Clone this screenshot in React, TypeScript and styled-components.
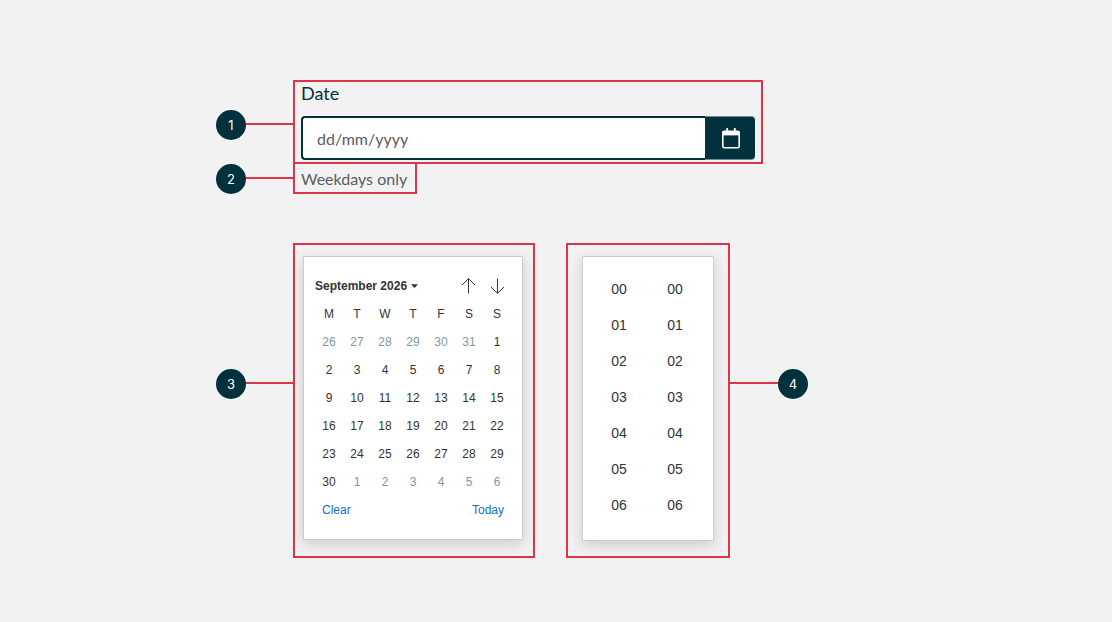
import React from "react";
import styled, { createGlobalStyle } from "styled-components";

const ink = "#00313c";
const accent = "#dc3545";

const GlobalStyle = createGlobalStyle`
  *, *::before, *::after { box-sizing: border-box; }
  body { margin: 0; background: #f2f2f2; }
  button { padding: 0; border: 0; background: none; font: inherit; color: inherit; cursor: pointer; }
`;

const Page = styled.main`
  max-width: 680px;
  margin: 0 auto;
  padding: 80px 0 64px;
  font-family: Lato, "Liberation Sans", sans-serif;
`;

const Row = styled.div<{ $gap?: number }>`
  display: flex;
  align-items: flex-start;
  margin-top: ${(p) => p.$gap ?? 0}px;
`;

const CalloutBox = styled.div<{ $side: "left" | "right"; $top: number }>`
  display: flex;
  flex: none;
  flex-direction: ${(p) => (p.$side === "left" ? "row" : "row-reverse")};
  width: 78px;
  padding-top: ${(p) => p.$top}px;
  margin-right: ${(p) => (p.$side === "left" ? -1 : 0)}px;
`;

const Badge = styled.span`
  flex: none;
  width: 30px;
  height: 30px;
  border-radius: 50%;
  background: ${ink};
  color: #fff;
  font-family: Inter, "Liberation Sans", sans-serif;
  font-size: 13px;
  line-height: 30px;
  text-align: center;
`;

const Connector = styled.span`
  flex: 1;
  height: 2px;
  margin-top: 13px;
  background: ${accent};
`;

const Outline = styled.div`
  border: 2px solid ${accent};
`;

const FieldOutline = styled(Outline)`
  flex: 0 1 470px;
  padding: 0 6px 2px;
`;

const HintOutline = styled(Outline)`
  min-width: 124px;
  padding: 2px 6px 0;
`;

const CalendarOutline = styled(Outline)`
  flex: none;
  margin-right: 31px;
  padding: 11px 10px 16px 8px;
`;

const TimeOutline = styled(Outline)`
  flex: none;
  padding: 11px 14px 15px;
`;

const Label = styled.label`
  display: block;
  height: 34px;
  color: ${ink};
  font-size: 18px;
  line-height: 22px;
`;

const Field = styled.div`
  display: flex;
  height: 44px;
`;

const DateInput = styled.input`
  flex: 1;
  min-width: 0;
  padding: 2px 14px 0;
  border: 2px solid ${ink};
  border-right: 0;
  border-radius: 4px 0 0 4px;
  background: #fff;
  color: #555;
  font: 16px/24px Lato, "Liberation Sans", sans-serif;
  &::placeholder { color: #5c5c5c; opacity: 1; }
`;

const CalendarButton = styled.button`
  display: flex;
  align-items: center;
  justify-content: center;
  width: 50px;
  border-top: 1px solid #728a91;
  border-bottom: 1px solid #728a91;
  border-radius: 0 4px 4px 0;
  background: ${ink};
`;

const Hint = styled.p`
  margin: 0;
  color: #5c5c5c;
  font-size: 16px;
  line-height: 26px;
  white-space: nowrap;
`;

const Panel = styled.div`
  border: 1px solid #ccc;
  border-radius: 1px;
  background: #fff;
  box-shadow: 0 4px 14px rgba(0, 0, 0, 0.16);
  color: #333;
  font-family: "Liberation Sans", Arial, sans-serif;
`;

const CalendarPanel = styled(Panel)`
  padding: 15px 11px;
  font-size: 12px;
`;

const PanelHeader = styled.div`
  display: flex;
  align-items: center;
  height: 28px;
`;

const MonthButton = styled.button`
  display: flex;
  align-items: center;
  gap: 4px;
  margin-right: auto;
  font-weight: 700;
`;

const ArrowButton = styled.button`
  display: flex;
  align-items: center;
  justify-content: center;
  width: 29px;
  height: 28px;
`;

const DayTable = styled.table`
  border-collapse: collapse;
  th, td {
    width: 28px;
    height: 28px;
    padding: 0;
    font-weight: 400;
    text-align: center;
  }
`;

const DayButton = styled.button<{ $outside: boolean }>`
  display: block;
  width: 28px;
  height: 28px;
  color: ${(p) => (p.$outside ? "#7f989e" : "#333")};
`;

const PanelFooter = styled.div`
  display: flex;
  align-items: center;
  justify-content: space-between;
  height: 28px;
  padding: 0 7px;
`;

const ActionButton = styled.button`
  color: #1170cc;
`;

const TimePanel = styled(Panel)`
  display: flex;
  padding: 14px 10px 17px 8px;
  font-size: 14px;
`;

const TimeList = styled.ul`
  margin: 0;
  padding: 0;
  list-style: none;
`;

const TimeButton = styled.button`
  display: block;
  width: 56px;
  height: 36px;
`;

function Callout({ n, top, side = "left" }: { n: number; top: number; side?: "left" | "right" }) {
  return (
    <CalloutBox $side={side} $top={top}>
      <Badge>{n}</Badge>
      <Connector />
    </CalloutBox>
  );
}

const weekdays = ["M", "T", "W", "T", "F", "S", "S"];
const days = [
  ...[26, 27, 28, 29, 30, 31].map((day) => ({ day, outside: true })),
  ...Array.from({ length: 30 }, (_, i) => ({ day: i + 1, outside: false })),
  ...[1, 2, 3, 4, 5, 6].map((day) => ({ day, outside: true })),
];
const weeks = Array.from({ length: 6 }, (_, i) => days.slice(i * 7, i * 7 + 7));
const times = ["00", "01", "02", "03", "04", "05", "06"];

export default function App() {
  return (
    <>
      <GlobalStyle />
      <Page>
        <Row>
          <Callout n={1} top={30} />
          <FieldOutline>
            <Label htmlFor="date">Date</Label>
            <Field>
              <DateInput id="date" type="text" placeholder="dd/mm/yyyy" aria-describedby="date-hint" />
              <CalendarButton type="button" aria-label="Open calendar">
                <svg width="20" height="22" viewBox="0 0 20 22" fill="none">
                  <path d="M7.2 1v3M14.8 1v3" stroke="#fff" strokeWidth="1.8" />
                  <rect x="2.8" y="4.3" width="16.4" height="16.4" rx="1.4" stroke="#fff" strokeWidth="1.6" />
                  <path d="M2.5 4h17v4.4h-17z" fill="#fff" />
                </svg>
              </CalendarButton>
            </Field>
          </FieldOutline>
        </Row>
        <Row $gap={-2}>
          <Callout n={2} top={2} />
          <HintOutline>
            <Hint id="date-hint">Weekdays only</Hint>
          </HintOutline>
        </Row>
        <Row $gap={49}>
          <Callout n={3} top={126} />
          <CalendarOutline>
            <CalendarPanel>
              <PanelHeader>
                <MonthButton type="button">
                  September 2026
                  <svg width="7" height="4" viewBox="0 0 7 4">
                    <path d="M0 .3h7L3.5 3.9z" fill="#333" />
                  </svg>
                </MonthButton>
                <ArrowButton type="button" aria-label="Previous month">
                  <svg width="15" height="16" viewBox="0 0 15 16" fill="none" stroke="#333">
                    <path d="M8.5 15.5V1M2 7l6.5-6.3L15 7" />
                  </svg>
                </ArrowButton>
                <ArrowButton type="button" aria-label="Next month">
                  <svg width="15" height="16" viewBox="0 0 15 16" fill="none" stroke="#333">
                    <path d="M8.5 .5V15M2 9l6.5 6.3L15 9" />
                  </svg>
                </ArrowButton>
              </PanelHeader>
              <DayTable>
                <thead>
                  <tr>
                    {weekdays.map((d, i) => (
                      <th key={i} scope="col">{d}</th>
                    ))}
                  </tr>
                </thead>
                <tbody>
                  {weeks.map((week, i) => (
                    <tr key={i}>
                      {week.map(({ day, outside }) => (
                        <td key={day}>
                          <DayButton type="button" $outside={outside}>{day}</DayButton>
                        </td>
                      ))}
                    </tr>
                  ))}
                </tbody>
              </DayTable>
              <PanelFooter>
                <ActionButton type="button">Clear</ActionButton>
                <ActionButton type="button">Today</ActionButton>
              </PanelFooter>
            </CalendarPanel>
          </CalendarOutline>
          <TimeOutline>
            <TimePanel>
              {["Hours", "Minutes"].map((name) => (
                <TimeList key={name} aria-label={name}>
                  {times.map((t) => (
                    <li key={t}>
                      <TimeButton type="button">{t}</TimeButton>
                    </li>
                  ))}
                </TimeList>
              ))}
            </TimePanel>
          </TimeOutline>
          <Callout n={4} top={126} side="right" />
        </Row>
      </Page>
    </>
  );
}
